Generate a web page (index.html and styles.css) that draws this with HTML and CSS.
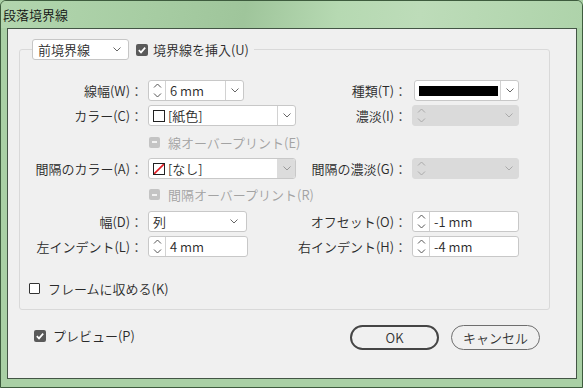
FILE: index.html
```html
<!DOCTYPE html>
<html lang="ja">
<head>
  <meta charset="UTF-8" />
  <title>段落境界線</title>
  <link rel="stylesheet" href="styles.css">
</head>
<body>
  <div class="window">
    <div class="titlebar">段落境界線</div>

    <div class="panel">
      <fieldset class="group">
        <legend class="legend">
          <div class="legend-row">
            <div class="top-select">
              <span>前境界線</span>
              <svg width="8" height="5" viewBox="0 0 8 5"><path d="M0.5 0.5L4 4L7.5 0.5" fill="none" stroke="#666"/></svg>
            </div>
            <label class="check">
              <span class="box on"><svg width="12" height="12" viewBox="0 0 12 12"><path d="M2.8 6.2L5 8.4L9.2 3.6" fill="none" stroke="#fff" stroke-width="1.7"/></svg></span>
              境界線を挿入(U)
            </label>
          </div>
        </legend>

        <div class="form-grid">
          <!-- row 1 -->
          <div class="label">線幅(W)：</div>
          <div class="field w96">
            <span class="spin"><svg width="9" height="17" viewBox="0 0 9 17"><path d="M1 5.5L4.5 2L8 5.5M1 11.5L4.5 15L8 11.5" fill="none" stroke="#555"/></svg></span>
            <span class="value">6 mm</span>
            <span class="drop"><svg width="8" height="5" viewBox="0 0 8 5"><path d="M0.5 0.5L4 4L7.5 0.5" fill="none" stroke="#666"/></svg></span>
          </div>
          <div class="label">種類(T)：</div>
          <div class="field type">
            <span class="value"><span class="stroke-bar"></span></span>
            <span class="drop"><svg width="8" height="5" viewBox="0 0 8 5"><path d="M0.5 0.5L4 4L7.5 0.5" fill="none" stroke="#666"/></svg></span>
          </div>

          <!-- row 2 -->
          <div class="label">カラー(C)：</div>
          <div class="field w148">
            <span class="value"><span class="swatch"></span>[紙色]</span>
            <span class="drop"><svg width="8" height="5" viewBox="0 0 8 5"><path d="M0.5 0.5L4 4L7.5 0.5" fill="none" stroke="#666"/></svg></span>
          </div>
          <div class="label">濃淡(I)：</div>
          <div class="field disabled w107">
            <span class="spin"><svg width="9" height="17" viewBox="0 0 9 17"><path d="M1 5.5L4.5 2L8 5.5M1 11.5L4.5 15L8 11.5" fill="none" stroke="#aaa"/></svg></span>
            <span class="value"></span>
            <span class="drop"><svg width="8" height="5" viewBox="0 0 8 5"><path d="M0.5 0.5L4 4L7.5 0.5" fill="none" stroke="#aaa"/></svg></span>
          </div>

          <!-- row 3 -->
          <div></div>
          <div class="check dim wide"><span class="box dis"><span class="dash"></span></span>線オーバープリント(E)</div>

          <!-- row 4 -->
          <div class="label">間隔のカラー(A)：</div>
          <div class="field w148">
            <span class="value"><span class="swatch none"><svg width="10" height="10" viewBox="0 0 10 10"><path d="M0 10L10 0" stroke="#e01b24" stroke-width="1.6"/></svg></span>[なし]</span>
            <span class="drop shaded"><svg width="8" height="5" viewBox="0 0 8 5"><path d="M0.5 0.5L4 4L7.5 0.5" fill="none" stroke="#999"/></svg></span>
          </div>
          <div class="label">間隔の濃淡(G)：</div>
          <div class="field disabled w107">
            <span class="spin"><svg width="9" height="17" viewBox="0 0 9 17"><path d="M1 5.5L4.5 2L8 5.5M1 11.5L4.5 15L8 11.5" fill="none" stroke="#aaa"/></svg></span>
            <span class="value"></span>
            <span class="drop"><svg width="8" height="5" viewBox="0 0 8 5"><path d="M0.5 0.5L4 4L7.5 0.5" fill="none" stroke="#aaa"/></svg></span>
          </div>

          <!-- row 5 -->
          <div></div>
          <div class="check dim wide"><span class="box dis"><span class="dash"></span></span>間隔オーバープリント(R)</div>

          <!-- row 6 -->
          <div class="label">幅(D)：</div>
          <div class="field w99 plain">
            <span class="value">列</span>
            <span class="drop"><svg width="8" height="5" viewBox="0 0 8 5"><path d="M0.5 0.5L4 4L7.5 0.5" fill="none" stroke="#666"/></svg></span>
          </div>
          <div class="label">オフセット(O)：</div>
          <div class="field w107">
            <span class="spin"><svg width="9" height="17" viewBox="0 0 9 17"><path d="M1 5.5L4.5 2L8 5.5M1 11.5L4.5 15L8 11.5" fill="none" stroke="#555"/></svg></span>
            <span class="value">-1 mm</span>
          </div>

          <!-- row 7 -->
          <div class="label">左インデント(L)：</div>
          <div class="field w100">
            <span class="spin"><svg width="9" height="17" viewBox="0 0 9 17"><path d="M1 5.5L4.5 2L8 5.5M1 11.5L4.5 15L8 11.5" fill="none" stroke="#555"/></svg></span>
            <span class="value">4 mm</span>
          </div>
          <div class="label">右インデント(H)：</div>
          <div class="field w107">
            <span class="spin"><svg width="9" height="17" viewBox="0 0 9 17"><path d="M1 5.5L4.5 2L8 5.5M1 11.5L4.5 15L8 11.5" fill="none" stroke="#555"/></svg></span>
            <span class="value">-4 mm</span>
          </div>
        </div>

        <label class="check fit"><span class="box off"></span>フレームに収める(K)</label>
      </fieldset>

      <div class="footer">
        <label class="check preview">
          <span class="box on"><svg width="12" height="12" viewBox="0 0 12 12"><path d="M2.8 6.2L5 8.4L9.2 3.6" fill="none" stroke="#fff" stroke-width="1.7"/></svg></span>
          プレビュー(P)
        </label>
        <div class="buttons">
          <button class="btn btn-ok">OK</button>
          <button class="btn">キャンセル</button>
        </div>
      </div>
    </div>
  </div>
</body>
</html>
```

FILE: styles.css
```css
* {
  box-sizing: border-box;
  margin: 0;
  padding: 0;
}
body {
  font-family: "Noto Sans CJK JP", "Noto Sans", sans-serif;
  font-size: 13px;
  font-weight: 350;
  color: #2a2a2a;
  background: #a9d0a5;
}
.window {
  width: 583px;
  height: 388px;
  display: flex;
  flex-direction: column;
  border: 1px solid #3e5c3e;
  border-radius: 6px 6px 0 0;
  background: #a9d0a5;
  padding-bottom: 8px;
  overflow: hidden;
}
.titlebar {
  height: 27px;
  line-height: 27px;
  padding-left: 2px;
  color: #111;
  background: linear-gradient(100deg, #b2d6ae 0%, #a7cda3 25%, #9fc59b 42%, #b6d9b2 58%, #bddcb9 72%, #aed3aa 100%);
}
.panel {
  flex: 1;
  margin: 0 5px 0 6px;
  border: 1px solid #435545;
  background: #f0f0f0;
  padding: 10px 0 0 11px;
}
.group {
  width: 531px;
  min-width: 0;
  border: 1px solid #d9d9d9;
  border-radius: 3px;
  padding: 20px 0 11px 0;
}
.legend {
  margin-left: 12px;
  padding-right: 5px;
}
.legend-row {
  display: flex;
  align-items: center;
  gap: 7px;
}
.top-select {
  width: 97px;
  height: 21px;
  display: flex;
  align-items: center;
  justify-content: space-between;
  padding: 0 7px 0 5px;
  background: #fff;
  border: 1px solid #c6c6c6;
  border-radius: 3px;
}
.check {
  display: flex;
  align-items: center;
  gap: 5px;
  white-space: nowrap;
}
.check.dim {
  color: #a3a3a3;
}
.check.wide {
  grid-column: 2 / -1;
  padding-left: 1px;
  gap: 8px;
}
.box {
  width: 12px;
  height: 12px;
  border-radius: 2px;
  display: flex;
  align-items: center;
  justify-content: center;
  flex-shrink: 0;
}
.box.on {
  background: #5a5a5a;
}
.box.off {
  width: 11px;
  height: 11px;
  border: 1px solid #333;
  border-radius: 1px;
  background: #fff;
}
.box.dis {
  width: 11px;
  height: 11px;
  background: #c4c4c4;
}
.dash {
  width: 5px;
  height: 2px;
  background: #f2f2f2;
}
.form-grid {
  display: grid;
  grid-template-columns: 128px 148px 116px 107px;
  grid-template-rows: 21px 21px 24px 21px 23px 22px 21px;
  row-gap: 4px;
  align-items: center;
  justify-items: start;
}
.label {
  justify-self: stretch;
  text-align: right;
  padding-right: 5px;
  white-space: nowrap;
}
.field {
  display: flex;
  height: 21px;
  background: #fff;
  border: 1px solid #c8c8c8;
  border-radius: 3px;
  overflow: hidden;
}
.field .spin {
  width: 17px;
  display: flex;
  align-items: center;
  justify-content: center;
  border-right: 1px solid #d2d2d2;
}
.field .value {
  flex: 1;
  display: flex;
  align-items: center;
  padding-left: 4px;
  line-height: 19px;
}
.field .drop {
  width: 18px;
  display: flex;
  align-items: center;
  justify-content: center;
  border-left: 1px solid #d2d2d2;
}
.field .drop.shaded {
  background: #dcdcdc;
  border-left-color: #dcdcdc;
}
.field.plain .drop {
  border-left: none;
  width: 24px;
}
.field.disabled {
  background: #dadada;
  border-color: #dadada;
}
.field.disabled .spin,
.field.disabled .drop {
  border: none;
}
.w96 { width: 96px; }
.w99 { width: 99px; }
.w100 { width: 100px; }
.w107 { width: 107px; }
.w148 { width: 148px; }
.field.type {
  width: 105px;
  margin-left: 2px;
}
.stroke-bar {
  width: 79px;
  height: 10px;
  background: #000;
}
.swatch {
  width: 12px;
  height: 12px;
  border: 1px solid #222;
  background: #fff;
  margin-right: 3px;
  display: flex;
}
.fit {
  margin: 22px 0 0 9px;
  gap: 8px;
}
.footer {
  width: 521px;
  margin-top: 15px;
  padding-left: 15px;
  display: flex;
  align-items: center;
  justify-content: space-between;
}
.preview {
  margin-bottom: 4px;
  gap: 7px;
}
.buttons {
  display: flex;
  gap: 12px;
}
.btn {
  width: 89px;
  height: 25px;
  border: 1px solid #6e6e6e;
  border-radius: 13px;
  background: #f0f0f0;
  color: #333;
  font: inherit;
}
.btn-ok {
  border: 2px solid #454545;
}
```
